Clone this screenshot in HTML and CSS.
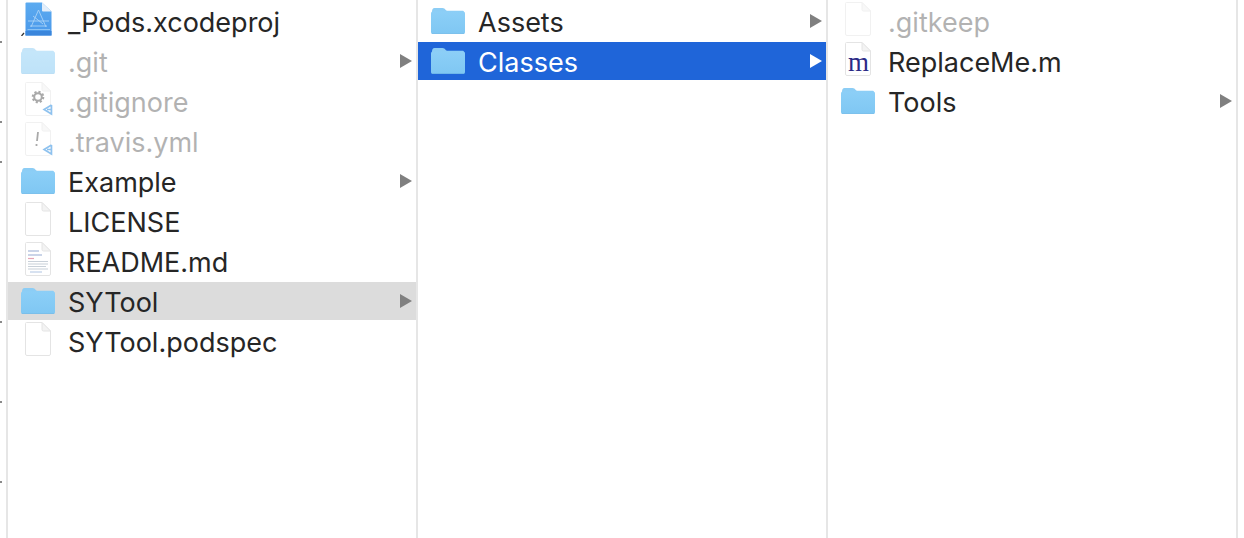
FILE: index.html
```html
<!DOCTYPE html>
<html lang="en">
<head>
  <meta charset="UTF-8" />
  <title>Finder columns</title>
  <link rel="stylesheet" href="styles.css">
</head>
<body>
  <!-- shared icons -->
  <svg class="defs" width="0" height="0">
    <defs>
      <linearGradient id="folderFill" x1="0" y1="0" x2="0" y2="1">
        <stop offset="0" stop-color="#8ccff7" />
        <stop offset="1" stop-color="#7fc7f3" />
      </linearGradient>
      <linearGradient id="projFill" x1="0" y1="0" x2="0" y2="1">
        <stop offset="0" stop-color="#5cabf0" />
        <stop offset="1" stop-color="#4a98ea" />
      </linearGradient>
      <symbol id="folder" viewBox="0 0 34 28">
        <path d="M1 4.500C1 2.600 1.800 1 3.500 1h8c1.500 0 2.200 .8 3 1.700.6 .7 1.200 1.100 2.300 1.100H31.500c1 0 1.500 .6 1.500 1.500V6H1z" fill="#8ccdf5" />
        <path d="M0 6.500C0 5 .8 4.400 2 4.400h30c1.300 0 2 .7 2 2V25c0 1-.8 1.800-2.200 1.800H2.200C.8 26.800 0 26 0 25z" fill="url(#folderFill)" />
        <rect x=".5" y="26" width="33" height=".8" rx=".4" fill="#72bbe9" />
      </symbol>
      <symbol id="page" viewBox="0 0 28 34">
        <path d="M1.500 1.500a1 1 0 0 1 1-1H18L26.500 9v23a1.500 1.500 0 0 1-1.500 1.500H3a1.500 1.500 0 0 1-1.500-1.500z" fill="#fff" stroke="#e4e4e4" />
        <path d="M18 .5V7.500a1.500 1.500 0 0 0 1.500 1.500h7z" fill="#f3f3f3" stroke="#e4e4e4" />
      </symbol>
    </defs>
  </svg>

  <div class="finder">
    <div class="ticks">
      <i class="tick on"></i>
      <i class="tick"></i>
      <i class="tick on"></i>
      <i class="tick on"></i>
      <i class="tick"></i>
      <i class="tick"></i>
      <i class="tick"></i>
      <i class="tick on"></i>
      <i class="tick"></i>
      <i class="tick on"></i>
      <i class="tick"></i>
      <i class="tick on"></i>
    </div>

    <div class="column">
      <div class="row">
        <svg class="icon doc" viewBox="0 0 34 34">
          <path d="M4.500 1.500a1 1 0 0 1 1-1H21L30.500 9.500v24H4.500z" fill="url(#projFill)" />
          <path d="M21 .5V8.500a1 1 0 0 0 1 1h8.500z" fill="#e3eefa" />
          <rect x="4.500" y="29" width="26" height="4.500" fill="#3a86dc" />
          <path d="M6.500 27.500H29" stroke="#9ccbf5" stroke-width=".8" />
          <path d="M17.500 8L10 25M17.500 8L25 25M7 19h21M9 24h17M12 14l10 8" fill="none" stroke="#a9d2f7" stroke-width=".9" />
          <path d="M.5 34L3 31" stroke="#333" stroke-width="1.300" />
        </svg>
        <span class="name">_Pods.xcodeproj</span>
      </div>
      <div class="row dim">
        <svg class="icon"><use href="#folder" /></svg>
        <span class="name">.git</span>
        <span class="arrow"></span>
      </div>
      <div class="row dim">
        <svg class="icon doc" viewBox="0 0 34 34">
          <use href="#page" x="3" width="28" height="34" />
          <circle cx="17" cy="15" r="5" fill="none" stroke="#555" stroke-width="2.600" stroke-dasharray="2 1.900" />
          <circle cx="17" cy="15" r="3.800" fill="none" stroke="#555" stroke-width="2" />
          <path d="M30.500 23L23 27.500L30.500 32V23M26 27.500h4.500" fill="none" stroke="#1f86e0" stroke-width="1.600" />
        </svg>
        <span class="name">.gitignore</span>
      </div>
      <div class="row dim">
        <svg class="icon doc" viewBox="0 0 34 34">
          <use href="#page" x="3" width="28" height="34" />
          <path d="M17 10L16 19M15.500 22v2" fill="none" stroke="#555" stroke-width="1.800" />
          <path d="M30.500 23L23 27.500L30.500 32V23M26 27.500h4.500" fill="none" stroke="#1f86e0" stroke-width="1.600" />
        </svg>
        <span class="name">.travis.yml</span>
      </div>
      <div class="row">
        <svg class="icon"><use href="#folder" /></svg>
        <span class="name">Example</span>
        <span class="arrow"></span>
      </div>
      <div class="row">
        <svg class="icon doc"><use href="#page" x="3" width="28" height="34" /></svg>
        <span class="name">LICENSE</span>
      </div>
      <div class="row">
        <svg class="icon doc" viewBox="0 0 34 34">
          <use href="#page" x="3" width="28" height="34" />
          <g class="readme-lines">
            <path d="M7 9h11M7 13h14" stroke="#7d96c8" stroke-width="1.200" />
            <path d="M7 16.500h6" stroke="#e08fa5" stroke-width="1.200" />
            <path d="M7 19.500h20M7 22h20M7 24.500h18M7 27h20" stroke="#bcc6d0" stroke-width="1.200" />
            <path d="M9 30h12" stroke="#9db6dc" stroke-width="1" />
          </g>
        </svg>
        <span class="name">README.md</span>
      </div>
      <div class="row parent">
        <svg class="icon"><use href="#folder" /></svg>
        <span class="name">SYTool</span>
        <span class="arrow"></span>
      </div>
      <div class="row">
        <svg class="icon doc"><use href="#page" x="3" width="28" height="34" /></svg>
        <span class="name">SYTool.podspec</span>
      </div>
    </div>

    <div class="column">
      <div class="row">
        <svg class="icon"><use href="#folder" /></svg>
        <span class="name">Assets</span>
        <span class="arrow"></span>
      </div>
      <div class="row selected">
        <svg class="icon"><use href="#folder" /></svg>
        <span class="name">Classes</span>
        <span class="arrow"></span>
      </div>
    </div>

    <div class="column">
      <div class="row dim">
        <svg class="icon doc"><use href="#page" x="3" width="28" height="34" /></svg>
        <span class="name">.gitkeep</span>
      </div>
      <div class="row">
        <svg class="icon doc" viewBox="0 0 34 34">
          <use href="#page" x="3" width="28" height="34" />
          <text class="glyph" x="17.500" y="29">m</text>
        </svg>
        <span class="name">ReplaceMe.m</span>
      </div>
      <div class="row">
        <svg class="icon"><use href="#folder" /></svg>
        <span class="name">Tools</span>
        <span class="arrow"></span>
      </div>
    </div>
  </div>
</body>
</html>
```

FILE: styles.css
```css
/* PAGE */
html, body {
  margin: 0;
  padding: 0;
  background-color: #fff;
}

body {
  font-family: Inter, 'Noto Sans', sans-serif;
  color: #262626;
  overflow: hidden;
}

.defs {
  display: block;
  height: 0;
}

/* FINDER COLUMNS */
.finder {
  display: flex;
  height: 538px;
  width: 1238px;
}

.ticks {
  width: 6px;
  flex: none;
  padding-top: 41px;
  box-sizing: border-box;
}
.tick {
  display: block;
  height: 40px;
}
.tick.on::before {
  content: "";
  display: block;
  width: 2px;
  height: 2px;
  background-color: #8a8a8a;
}

.column {
  flex: 1;
  padding-top: 2px;
  border-left: 2px solid #e6e6e6;
  display: flex;
  flex-direction: column;
  gap: 2px;
}
.column:last-child {
  border-right: 2px solid #e6e6e6;
}

/* ROWS */
.row {
  height: 38px;
  display: flex;
  align-items: center;
  padding: 0 4px 0 13px;
}

.icon {
  width: 34px;
  height: 34px;
  flex: none;
  margin-right: 13px;
}
.icon.doc {
  align-self: flex-start;
}

.name {
  flex: 1;
  font-size: 27px;
  padding-top: 2px;
  white-space: nowrap;
}

.arrow {
  width: 0;
  height: 0;
  border-left: 12px solid #808080;
  border-top: 7.5px solid transparent;
  border-bottom: 7.5px solid transparent;
}

.row.dim .icon {
  opacity: 0.5;
}
.row.dim .name {
  opacity: 0.35;
}

.row.parent {
  background-color: #dcdcdc;
}

.row.selected {
  background-color: #1f65d9;
  color: #fff;
}
.row.selected .arrow {
  border-left-color: #fff;
}

.readme-lines {
  opacity: 0.8;
}

.glyph {
  font-family: 'Liberation Serif', serif;
  font-size: 27px;
  fill: #2b2a86;
  text-anchor: middle;
}
```
